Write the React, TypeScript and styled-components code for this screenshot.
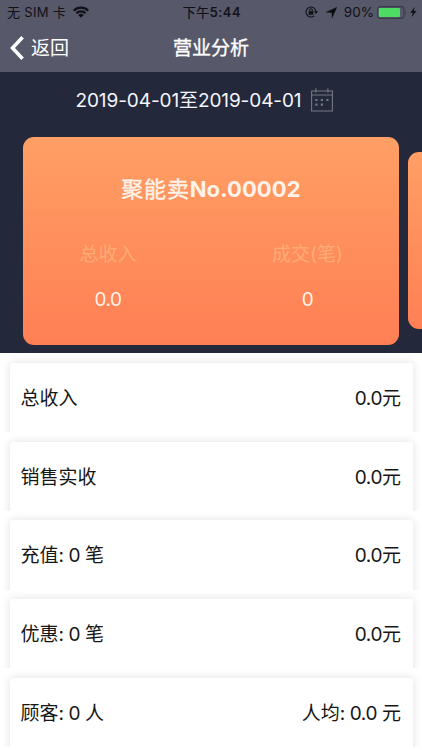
import React from "react";
import styled, { createGlobalStyle } from "styled-components";

const Global = createGlobalStyle`
  * { box-sizing: border-box; }
  body {
    margin: 0;
    background: #fff;
    font-family: Inter, "Noto Sans CJK SC", sans-serif;
    overflow: hidden;
  }
`;

const Screen = styled.main`
  width: 422px;
  height: 750px;
  overflow: hidden;
  background: #fff;
`;

const TopBar = styled.header`
  height: 72px;
  background: #575869;
`;

const StatusBar = styled.div`
  height: 24px;
  display: grid;
  grid-template-columns: 1fr auto 1fr;
  align-items: center;
  padding: 0 5px 0 7px;
  font-size: 12.5px;
  line-height: 24px;
  color: #111118;
`;

const StatusGroup = styled.div<{ $end?: boolean }>`
  display: flex;
  align-items: center;
  justify-content: ${(p) => (p.$end ? "flex-end" : "flex-start")};
  white-space: nowrap;
`;

const Carrier = styled.span`
  margin-right: 7px;
  font-size: 13px;
  line-height: 23px;
  letter-spacing: 0.3px;
`;

const Clock = styled.span`
  font-size: 13px;
  line-height: 23px;
  letter-spacing: 0.4px;
  -webkit-text-stroke: 0.2px #111118;

  b {
    font-weight: 500;
    letter-spacing: 0.6px;
  }
`;

const Percent = styled.span`
  font-size: 13.5px;
  margin: 0 3px 0 7px;
`;

const NavBar = styled.nav`
  height: 48px;
  display: grid;
  grid-template-columns: 1fr auto 1fr;
  align-items: center;
  padding: 0 10px;
  color: #fff;
`;

const Back = styled.a`
  display: flex;
  align-items: center;
  gap: 7px;
  font-size: 19px;
  line-height: 28px;

  span {
    padding-top: 1px;
  }
`;

const Title = styled.h1`
  margin: 0;
  padding-top: 1px;
  font-size: 19px;
  line-height: 28px;
  font-weight: 400;
  -webkit-text-stroke: 0.35px #fff;
`;

const Hero = styled.section`
  height: 281px;
  background: #24283b;
  overflow: hidden;
`;

const DateRow = styled.div`
  height: 64.5px;
  padding: 0 89px 9px 75.5px;
  display: flex;
  align-items: center;
  justify-content: space-between;
`;

const DateText = styled.span`
  padding-top: 3px;
  font-size: 19px;
  line-height: 28px;
  letter-spacing: -0.1px;
  color: #f4f6fc;
  white-space: nowrap;
`;

const Carousel = styled.div`
  display: flex;
  align-items: center;
  gap: 9px;
  padding-left: 23px;
`;

const Slide = styled.article<{ $small?: boolean }>`
  flex: none;
  width: 376px;
  height: ${(p) => (p.$small ? 177 : 208)}px;
  border-radius: 11px;
  background: linear-gradient(#ff9f65, #ff7f54);
  color: #fff2e9;
`;

const StoreName = styled.h2`
  margin: 0;
  padding-top: 36px;
  text-align: center;
  font-size: 22px;
  line-height: 32px;
  font-weight: 400;
  letter-spacing: 0.8px;
  -webkit-text-stroke: 0.4px #fff2e9;

  b {
    font-weight: 650;
    letter-spacing: 0.1px;
    -webkit-text-stroke: 0;
  }
`;

const Figures = styled.div`
  display: grid;
  grid-template-columns: 170px 1fr;
  margin-top: 36px;
  padding-right: 22px;
`;

const Figure = styled.div<{ $last?: boolean }>`
  text-align: center;
  ${(p) => p.$last && "padding-left: 45px;"}
`;

const FigureLabel = styled.div`
  font-size: 19px;
  line-height: 28px;
  color: #ffab76;
`;

const FigureValue = styled.div`
  margin-top: 17px;
  font-size: 19px;
  line-height: 28px;
  letter-spacing: -0.5px;
`;

const List = styled.section`
  display: flex;
  flex-direction: column;
  padding-top: 0.6px;
`;

const Row = styled.div`
  height: 78.7px;
  flex: none;
  padding: 9.5px 9.5px 0;
  overflow: hidden;
`;

const RowCard = styled.div`
  height: 80px;
  padding: 0 11.5px 8px 11px;
  display: flex;
  align-items: center;
  justify-content: space-between;
  border-radius: 3px;
  background: #fff;
  box-shadow: 0 0 10px rgba(0, 0, 0, 0.12);
  font-size: 19px;
  line-height: 28px;
  color: #161616;
`;

const Latin = styled.span`
  letter-spacing: -0.4px;
`;

const WifiIcon = () => (
  <svg width="16" height="12" viewBox="0 0 16 12" fill="#111118">
    <path d="M0 3.9a11.4 11.4 0 0 1 16 0L14.5 5.4a9.2 9.2 0 0 0-13 0Z" />
    <path d="M2.6 6.5a7.7 7.7 0 0 1 10.8 0L11.9 8a5.5 5.5 0 0 0-7.8 0Z" />
    <path d="M5.2 9.1a4 4 0 0 1 5.6 0L8 11.8Z" />
  </svg>
);

const LockIcon = () => (
  <svg width="13" height="12" viewBox="0 0 13 12" fill="none" stroke="#111118">
    <path d="M9.2 9.9A5 5 0 1 1 11 6" strokeWidth="1.1" />
    <path d="m9 5.3 4 0L11 8Z" fill="#111118" stroke="none" />
    <path d="M4.6 5.3V4.2a1.4 1.4 0 0 1 2.8 0v1.1" strokeWidth="1" />
    <path d="M3.6 5.1h4.8v3.6H3.6Z" fill="#111118" stroke="none" />
  </svg>
);

const ArrowIcon = styled(({ className }: { className?: string }) => (
  <svg className={className} width="11" height="11" viewBox="0 0 11 11">
    <path d="M10.8.3 6 10.8V5.6L.3 5.2Z" fill="#0b0b10" stroke="#0b0b10" strokeWidth=".4" />
  </svg>
))`
  margin-left: 8px;
`;

const BatteryIcon = () => (
  <svg width="30" height="13" viewBox="0 0 30 13">
    <rect x=".6" y=".6" width="26.3" height="11.8" rx="2.8" fill="none" stroke="#3b3c49" strokeWidth="1.2" />
    <rect x="1.8" y="2" width="21.2" height="9" rx="1" fill="#4ddb64" />
    <path d="M28 4.5q1.8 2 0 4Z" fill="#3b3c49" />
  </svg>
);

const BoltIcon = styled(({ className }: { className?: string }) => (
  <svg className={className} width="7" height="10" viewBox="0 0 7 10">
    <path d="M4.8 0 .2 5.7h2.6L1.6 10l5-6H3.9Z" fill="#111118" />
  </svg>
))`
  margin-left: 3px;
`;

const BackIcon = () => (
  <svg width="14" height="24" viewBox="0 0 14 24" fill="none" stroke="#fff" strokeWidth="3.5">
    <path d="M12.6 1.3 2.5 12l10.1 10.7" />
  </svg>
);

const CalendarIcon = () => (
  <svg width="22" height="24" viewBox="0 0 22 24" fill="none" stroke="#757780" strokeWidth="1.1">
    <path d="M.6 3h20.8v20H.6ZM.6 7h20.8M4.9.3v4.5M16.9.3v4.5" />
    <path
      d="M4.3 12h2.2M9.8 12H12M15.3 12h2.2M4.3 16.7h2.2M9.8 16.7H12"
      strokeWidth="2.2"
    />
  </svg>
);

/* Tightens the digits and punctuation while leaving the Chinese glyphs alone. */
const Mixed = ({ text }: { text: string }) => (
  <span>
    {text
      .split(/([\x20-\x7e]+)/)
      .filter(Boolean)
      .map((part, i) => (/^[\x20-\x7e]/.test(part) ? <Latin key={i}>{part}</Latin> : part))}
  </span>
);

const rows = [
  ["总收入", "0.0元"],
  ["销售实收", "0.0元"],
  ["充值: 0 笔", "0.0元"],
  ["优惠: 0 笔", "0.0元"],
  ["顾客: 0 人", "人均: 0.0 元"],
];

export default function App() {
  return (
    <Screen>
      <Global />
      <TopBar>
        <StatusBar>
          <StatusGroup>
            <Carrier>无 SIM 卡</Carrier>
            <WifiIcon />
          </StatusGroup>
          <Clock>
            下午<b>5:44</b>
          </Clock>
          <StatusGroup $end>
            <LockIcon />
            <ArrowIcon />
            <Percent>90%</Percent>
            <BatteryIcon />
            <BoltIcon />
          </StatusGroup>
        </StatusBar>
        <NavBar>
          <Back>
            <BackIcon />
            <span>返回</span>
          </Back>
          <Title>营业分析</Title>
        </NavBar>
      </TopBar>
      <Hero>
        <DateRow>
          <DateText>2019-04-01至2019-04-01</DateText>
          <CalendarIcon />
        </DateRow>
        <Carousel>
          <Slide>
            <StoreName>
              聚能卖<b>No.00002</b>
            </StoreName>
            <Figures>
              <Figure>
                <FigureLabel>总收入</FigureLabel>
                <FigureValue>0.0</FigureValue>
              </Figure>
              <Figure $last>
                <FigureLabel>成交(笔)</FigureLabel>
                <FigureValue>0</FigureValue>
              </Figure>
            </Figures>
          </Slide>
          <Slide $small />
        </Carousel>
      </Hero>
      <List>
        {rows.map(([label, value]) => (
          <Row key={label}>
            <RowCard>
              <Mixed text={label} />
              <Mixed text={value} />
            </RowCard>
          </Row>
        ))}
      </List>
    </Screen>
  );
}
